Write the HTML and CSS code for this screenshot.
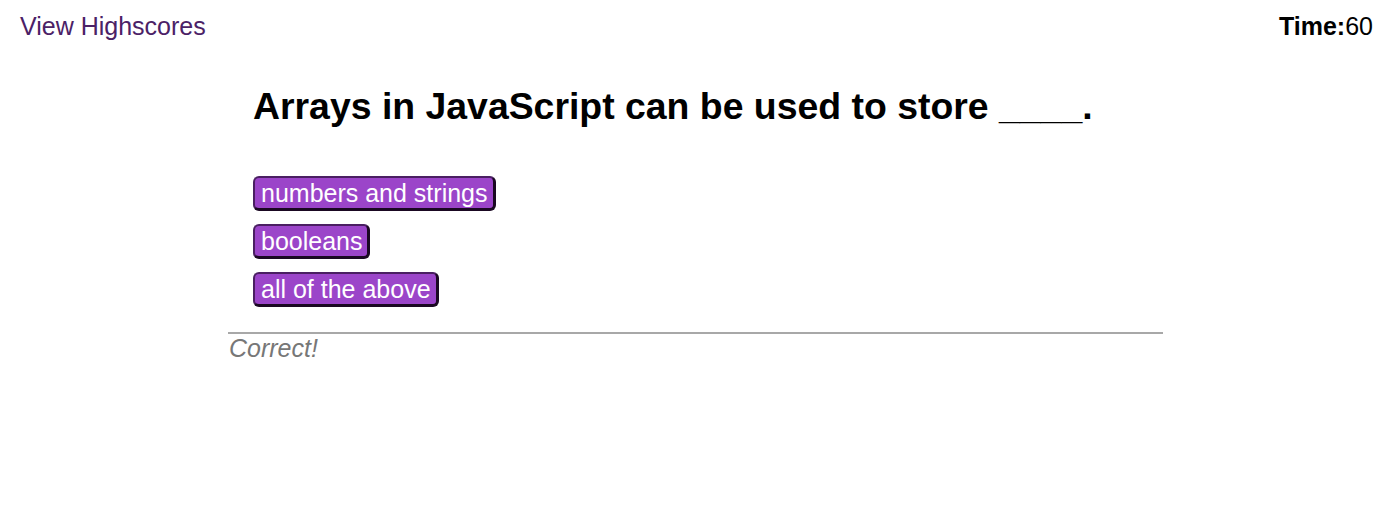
FILE: index.html
```html
<!DOCTYPE html>
<html>
<head>
<meta charset="utf-8">
<link rel="stylesheet" href="styles.css">
</head>
<body>
<header class="topbar">
  <a class="highscores" href="#">View Highscores</a>
  <div class="timer"><strong>Time:</strong><span>60</span></div>
</header>
<main class="quiz">
  <div class="question">
    <h1 class="title">Arrays in JavaScript can be used to store ____.</h1>
    <div class="choices">
      <button class="choice">numbers and strings</button>
      <button class="choice">booleans</button>
      <button class="choice">all of the above</button>
    </div>
  </div>
  <div class="feedback">Correct!</div>
</main>
</body>
</html>
```
FILE: styles.css
```css
body {
  margin: 0;
  font-family: "Liberation Sans", Arial, sans-serif;
  background: #fff;
  color: #000;
}
.topbar {
  display: flex;
  justify-content: space-between;
  align-items: center;
  padding: 12px 18px 0 20px;
  font-size: 25px;
}
.highscores {
  color: #4b2166;
  text-decoration: none;
}
.timer {
  margin-right: 0;
}
.quiz {
  width: 935px;
  margin: 0 auto;
}
.question {
  padding-left: 25px;
}
.title {
  font-size: 37.4px;
  margin: 44px 0 48px;
}
.choices {
  display: flex;
  flex-direction: column;
  align-items: flex-start;
  gap: 13px;
}
.choice {
  font-family: inherit;
  font-size: 25px;
  line-height: 29px;
  color: #fff;
  background: #9b45c9;
  border-style: solid;
  border-width: 2px 3px 3px 2px;
  border-color: #4a1f62 #1a0822 #1a0822 #4a1f62;
  border-radius: 6px;
  padding: 0 5px 0 6px;
  height: 35px;
}
.feedback {
  margin-top: 25px;
  border-top: 2px solid #a8a8a8;
  font-style: italic;
  color: #777;
  font-size: 25px;
  padding-left: 1px;
}
```
